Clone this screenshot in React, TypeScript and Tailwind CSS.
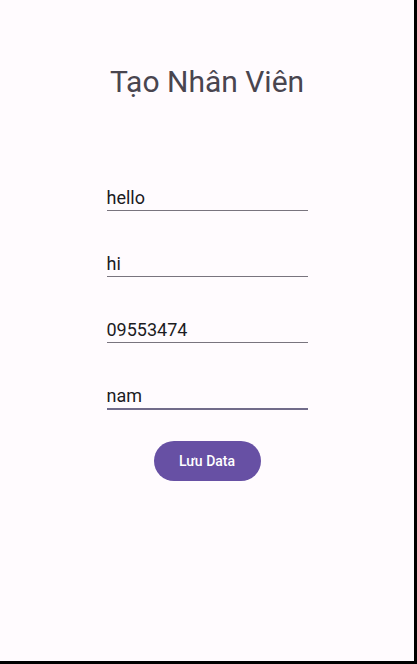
import React from "react";

const fields = ["hello", "hi", "09553474", "nam"];

export default function App() {
  return (
    <div className="w-[417px] h-[664px] bg-black" style={{ fontFamily: "Roboto, 'Noto Sans', sans-serif" }}>
      <div className="w-[414px] h-[661px] bg-[#fffbfe] flex flex-col items-center pt-[62px]">
        <h1 className="h-[40px] leading-[40px] text-[30px] text-[#49454f] font-normal">Tạo Nhân Viên</h1>
        <div className="mt-[84px] flex flex-col gap-[41px] w-[201px]">
          {fields.map((f, i) => (
            <div
              key={f}
              className={
                i === 3
                  ? "h-[24px] leading-[24px] text-[18px] text-[#1c1b1f] border-b-2 border-[#716b8a] box-content"
                  : "h-[24px] leading-[24px] text-[18px] text-[#1c1b1f] border-b border-[#79747e] box-content"
              }
            >
              {f}
            </div>
          ))}
        </div>
        <button className="mt-[31px] w-[107px] h-[40px] rounded-full bg-[#6750a4] text-white text-[14px] font-medium">
          Lưu Data
        </button>
      </div>
    </div>
  );
}
